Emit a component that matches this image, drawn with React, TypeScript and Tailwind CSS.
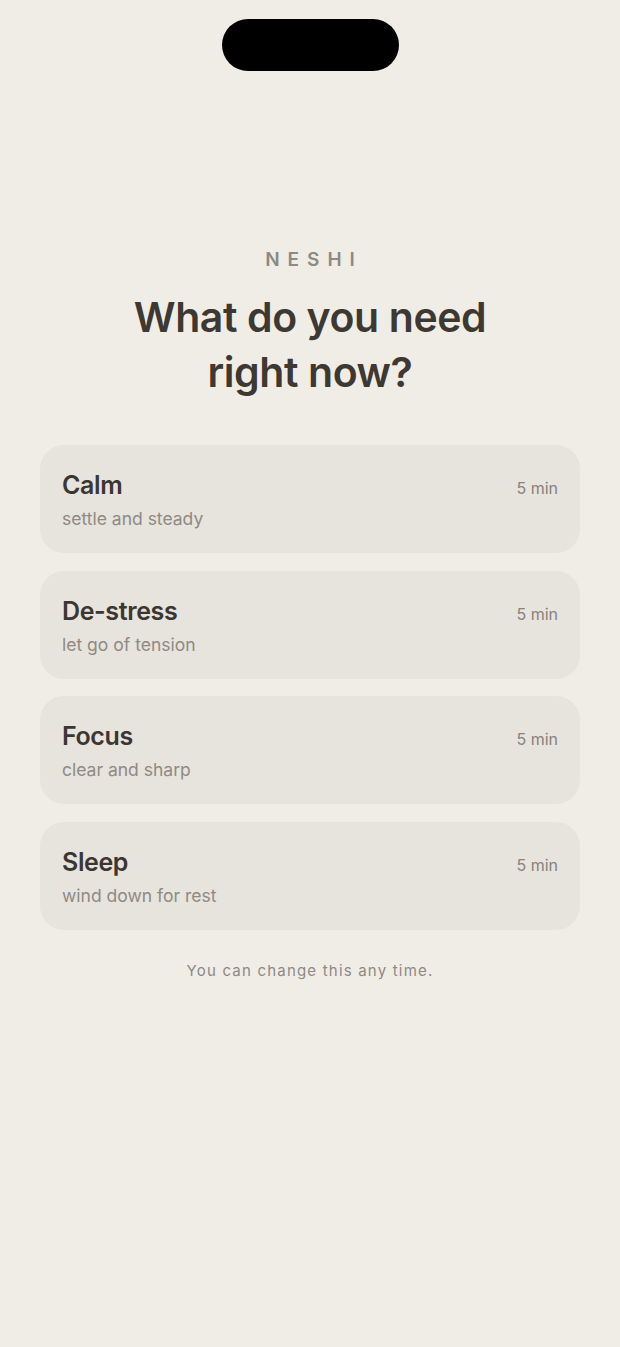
import { Fragment } from 'react';

interface Option {
  title: string;
  subtitle: string;
  duration: string;
}

const options: Option[] = [
  { title: 'Calm', subtitle: 'settle and steady', duration: '5 min' },
  { title: 'De-stress', subtitle: 'let go of tension', duration: '5 min' },
  { title: 'Focus', subtitle: 'clear and sharp', duration: '5 min' },
  { title: 'Sleep', subtitle: 'wind down for rest', duration: '5 min' },
];

function OptionCard({ option }: { option: Option }) {
  return (
    <button className="w-full h-[108px] rounded-[24px] bg-[#e7e3dd] pl-[22px] pr-[22px] flex items-start justify-between text-left">
      <div className="pt-[25px] flex flex-col">
        <span className="text-[25px] leading-[30px] font-semibold text-[#3b3631] tracking-[-0.015em]">
          {option.title}
        </span>
        <span className="mt-[7px] text-[17.5px] leading-[24px] text-[#8f8a84]">{option.subtitle}</span>
      </div>
      <span className="pt-[32px] text-[16px] leading-[22px] text-[#87827c]">{option.duration}</span>
    </button>
  );
}

export default function App() {
  return (
    <div
      className="min-h-[1347px] w-full bg-[#f0ede6] flex flex-col items-center"
      style={{ fontFamily: 'Inter, "Open Sans", sans-serif' }}
    >
      {/* Dynamic island */}
      <div className="mt-[19px] w-[177px] h-[52px] rounded-full bg-black" />

      <div className="mt-[177px] text-[19px] leading-[24px] font-semibold tracking-[0.42em] pl-[0.42em] text-[#8d8983]">
        NESHI
      </div>

      <h1 className="mt-[18px] text-center text-[41px] leading-[55px] font-semibold text-[#3d3832] tracking-[-0.01em]">
        What do you need
        <br />
        right now?
      </h1>

      <div className="mt-[45px] w-full px-[40px] flex flex-col gap-[17.5px]">
        {options.map((option) => (
          <Fragment key={option.title}>
            <OptionCard option={option} />
          </Fragment>
        ))}
      </div>

      <p className="mt-[31px] text-[15px] leading-[20px] tracking-[0.08em] text-[#8d8983]">
        You can change this any time.
      </p>
    </div>
  );
}
